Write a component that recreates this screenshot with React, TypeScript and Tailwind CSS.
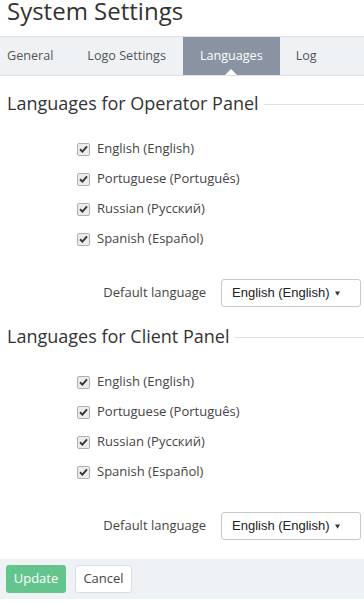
import React from "react";

const langs = [
  "English (English)",
  "Portuguese (Português)",
  "Russian (Русский)",
  "Spanish (Español)",
];

function Check() {
  return (
    <span className="w-[13px] h-[13px] rounded-[2px] border border-[#b0b0b0] bg-[#ececec] flex items-center justify-center shrink-0">
      <svg width="9" height="8" viewBox="0 0 9 8">
        <path d="M1 4.2 L3.4 6.6 L8 1.4" stroke="#3a3a3a" strokeWidth="2" fill="none" />
      </svg>
    </span>
  );
}

function Section({ title }: { title: string }) {
  return (
    <div className="flex flex-col">
      <div className="h-[22px] flex items-center pl-[7px]">
        <span className="text-[18px] leading-[22px] text-[#333] whitespace-nowrap">{title}</span>
        <span className="flex-1 h-px bg-[#dfe3e8] ml-[5px] mt-[2px]" />
      </div>
      <div className="mt-[20px] flex flex-col pl-[77px]">
        {langs.map((l) => (
          <div key={l} className="h-[30px] flex items-center gap-[7px]">
            <Check />
            <span className="text-[13px] text-[#444]">{l}</span>
          </div>
        ))}
      </div>
      <div className="mt-[25px] h-[28px] flex items-center justify-end pr-[3px]">
        <span className="text-[13px] text-[#444] mr-[15px]">Default language</span>
        <div
          className="w-[140px] h-[28px] border border-[#c8c8c8] rounded-[3px] flex items-center pl-[10px] pr-[20px] text-[13px] text-[#222]"
          style={{ fontFamily: '"Liberation Sans", Arial, sans-serif' }}
        >
          <span>English (English)</span>
          <svg className="ml-auto" width="5" height="5" viewBox="0 0 5 5">
            <path d="M0 0.5 L5 0.5 L2.5 4.8 Z" fill="#333" />
          </svg>
        </div>
      </div>
      <div className="h-[18px]" />
    </div>
  );
}

export default function App() {
  return (
    <div
      className="w-[364px] h-[605px] bg-white overflow-hidden flex flex-col"
      style={{ fontFamily: '"Open Sans", "Noto Sans", sans-serif' }}
    >
      <div className="h-[36px] pl-[7px] flex items-start">
        <span className="text-[24px] leading-[22px] text-[#333]">System Settings</span>
      </div>
      <div className="h-[40px] border-y border-[#dde2e8] bg-[#eef2f5] flex text-[12.6px] text-[#555]">
        <div className="pl-[7px] pr-[17px] flex items-center">General</div>
        <div className="px-[17px] flex items-center">Logo Settings</div>
        <div className="px-[17px] flex items-center bg-[#8993a2] text-white relative">
          Languages
          <span className="absolute bottom-0 left-1/2 -translate-x-1/2 w-0 h-0 border-l-[6px] border-r-[6px] border-b-[6px] border-l-transparent border-r-transparent border-b-white" />
        </div>
        <div className="px-[16px] flex items-center">Log</div>
      </div>
      <div className="h-[16px]" />
      <Section title="Languages for Operator Panel" />
      <Section title="Languages for Client Panel" />
      <div className="h-px" />
      <div className="h-[40px] bg-[#eef2f5] flex items-center pl-[6px] gap-[9px]">
        <div className="w-[60px] h-[28px] rounded-[3px] bg-[#64c48e] text-white text-[13px] flex items-center justify-center">
          Update
        </div>
        <div className="w-[57px] h-[28px] rounded-[3px] bg-white border border-[#d8dde3] text-[#444] text-[13px] flex items-center justify-center">
          Cancel
        </div>
      </div>
    </div>
  );
}
